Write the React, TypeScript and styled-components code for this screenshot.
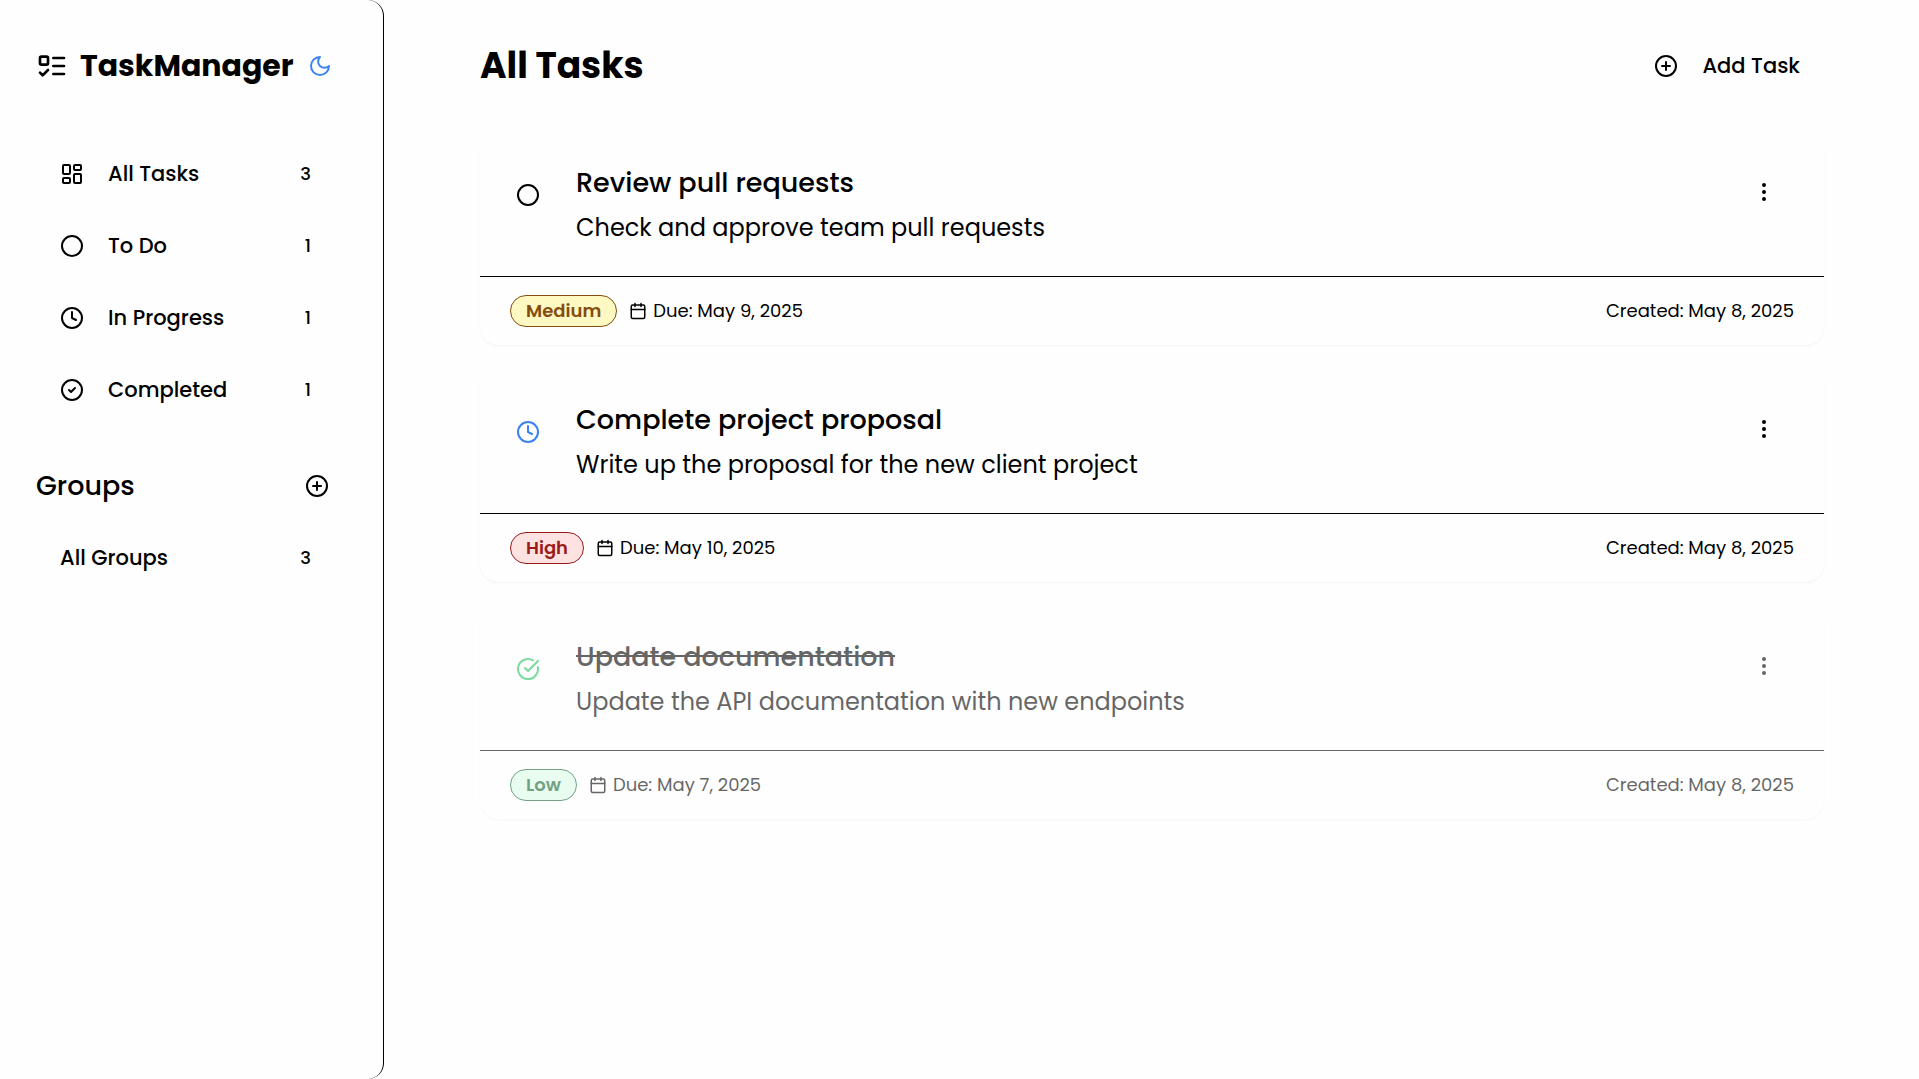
import React from "react";
import styled, { createGlobalStyle, css } from "styled-components";

const Global = createGlobalStyle`
  *, *::before, *::after { box-sizing: border-box; }
  html, body { margin: 0; padding: 0; }
  body {
    background: #fefefe;
    color: #000;
    font-family: Poppins, Inter, "Noto Sans", "Liberation Sans", sans-serif;
  }
  button { font: inherit; color: inherit; background: none; border: 0; padding: 0; margin: 0; }
  h1, h2, h3, p { margin: 0; }
`;

const Layout = styled.div`
  display: flex;
  height: 100vh;
  overflow: hidden;
`;

const Sidebar = styled.aside`
  width: 384px;
  flex: none;
  border-right: 1px solid #000;
  border-radius: 0 16px 16px 0;
  padding: 36px 36px 0;
`;

const Brand = styled.div`
  display: flex;
  align-items: center;
  height: 60px;
`;

const nowrap = css`
  white-space: nowrap;
`;

const BrandName = styled.h1`
  flex: none;
  width: 217px;
  margin-left: 12px;
  margin-right: 11px;
  font-size: 30px;
  font-weight: 700;
  ${nowrap}
`;

const Nav = styled.nav`
  display: flex;
  flex-direction: column;
  gap: 12px;
  margin-top: 48px;
`;

const NavItem = styled.button`
  display: flex;
  align-items: center;
  height: 60px;
  padding: 0 36px 0 24px;
  text-align: left;
`;

const NavLabel = styled.span<{ $indent?: boolean }>`
  flex: 1;
  margin-left: ${(p) => (p.$indent ? 24 : 0)}px;
  padding-bottom: 1px;
  font-size: 21px;
  font-weight: 500;
  line-height: 32px;
  ${nowrap}
`;

const NavCount = styled.span`
  font-size: 18px;
  font-weight: 500;
  line-height: 24px;
`;

const GroupsHeader = styled.div`
  display: flex;
  align-items: center;
  justify-content: space-between;
  height: 60px;
  margin: 36px 0 12px;
  padding-right: 18px;
`;

const GroupsTitle = styled.h2`
  font-size: 27px;
  font-weight: 500;
  ${nowrap}
`;

const Main = styled.main`
  flex: 1;
  min-width: 0;
  padding: 36px 95px 0 96px;
`;

const PageHeader = styled.header`
  display: flex;
  align-items: center;
  justify-content: space-between;
  height: 60px;
`;

const PageTitle = styled.h2`
  padding-bottom: 1px;
  font-size: 36px;
  font-weight: 700;
  line-height: 54px;
  ${nowrap}
`;

const AddButton = styled.button`
  display: flex;
  align-items: center;
  height: 60px;
  padding-right: 24px;
`;

const Raised = styled.span`
  padding-bottom: 2px;
`;

const TaskList = styled.section`
  display: flex;
  flex-direction: column;
  gap: 24px;
  margin-top: 36px;
`;

const Card = styled.article<{ $done?: boolean }>`
  height: 213px;
  border-radius: 18px;
  box-shadow: 0 1px 2px rgba(0, 0, 0, 0.05);
  opacity: ${(p) => (p.$done ? 0.6 : 1)};
`;

const CardBody = styled.div`
  display: flex;
  align-items: flex-start;
  height: 145px;
  padding: 24px 48px 0 36px;
  border-bottom: 1px solid #000;
`;

const StatusButton = styled.button<{ $color: string }>`
  display: flex;
  margin-top: 27px;
  color: ${(p) => p.$color};
`;

const CardText = styled.div`
  flex: 1;
  margin-left: 36px;
  padding-top: 6px;
`;

const TaskTitle = styled.h3<{ $done?: boolean }>`
  font-size: 27px;
  font-weight: 500;
  line-height: 42px;
  text-decoration: ${(p) => (p.$done ? "line-through" : "none")};
  ${nowrap}
`;

const TaskDescription = styled.p`
  margin-top: 3px;
  font-size: 24px;
  line-height: 42px;
  ${nowrap}
`;

const MenuButton = styled.button`
  display: flex;
  margin-top: 24px;
`;

const CardFooter = styled.div`
  display: flex;
  align-items: center;
  height: 68px;
  padding: 0 30px;
  font-size: 18px;
  line-height: 27px;
`;

const Badge = styled.span<{ $fg: string; $bg: string }>`
  display: flex;
  align-items: center;
  justify-content: center;
  height: 32px;
  padding: 0 15px 2px;
  border: 1px solid ${(p) => p.$fg};
  border-radius: 16px;
  background: ${(p) => p.$bg};
  color: ${(p) => p.$fg};
  font-weight: 600;
`;

const DueDate = styled.span`
  display: flex;
  align-items: center;
  gap: 6px;
  margin-left: 12px;
  ${nowrap}
`;

const CreatedDate = styled(Raised)`
  margin-left: auto;
`;

const Icon = styled.svg.attrs({
  viewBox: "0 0 24 24",
  fill: "none",
  stroke: "currentColor",
  strokeWidth: 2,
  strokeLinecap: "round",
  strokeLinejoin: "round",
})<{ $size?: number; $color?: string }>`
  flex: none;
  width: ${(p) => p.$size ?? 24}px;
  height: ${(p) => p.$size ?? 24}px;
  color: ${(p) => p.$color ?? "inherit"};
`;

const ListTodoIcon = () => (
  <Icon $size={32}>
    <rect x="3" y="5" width="6" height="6" rx="1" />
    <path d="m3 17 2 2 4-4M13 6h8M13 12h8M13 18h8" />
  </Icon>
);
const MoonIcon = () => (
  <Icon $color="#3b82f6">
    <path d="M12 3a6 6 0 0 0 9 9 9 9 0 1 1-9-9Z" />
  </Icon>
);
const DashboardIcon = () => (
  <Icon>
    <rect width="7" height="9" x="3" y="3" rx="1" />
    <rect width="7" height="5" x="14" y="3" rx="1" />
    <rect width="7" height="9" x="14" y="12" rx="1" />
    <rect width="7" height="5" x="3" y="16" rx="1" />
  </Icon>
);
const CircleIcon = () => (
  <Icon>
    <circle cx="12" cy="12" r="10" />
  </Icon>
);
const ClockIcon = () => (
  <Icon>
    <circle cx="12" cy="12" r="10" />
    <path d="M12 6v6l4 2" />
  </Icon>
);
const CheckIcon = () => (
  <Icon>
    <circle cx="12" cy="12" r="10" />
    <path d="m9 12 2 2 4-4" />
  </Icon>
);
const CheckBigIcon = () => (
  <Icon>
    <path d="M21.801 10A10 10 0 1 1 17 3.335" />
    <path d="m9 11 3 3L22 4" />
  </Icon>
);
const PlusIcon = () => (
  <Icon>
    <circle cx="12" cy="12" r="10" />
    <path d="M8 12h8M12 8v8" />
  </Icon>
);
const CalendarIcon = () => (
  <Icon $size={18}>
    <path d="M8 2v4M16 2v4M3 10h18" />
    <rect width="18" height="18" x="3" y="4" rx="2" />
  </Icon>
);
const MoreIcon = () => (
  <Icon>
    <circle cx="12" cy="12" r="1" />
    <circle cx="12" cy="5" r="1" />
    <circle cx="12" cy="19" r="1" />
  </Icon>
);

const navItems = [
  { label: "All Tasks", count: 3, icon: <DashboardIcon /> },
  { label: "To Do", count: 1, icon: <CircleIcon /> },
  { label: "In Progress", count: 1, icon: <ClockIcon /> },
  { label: "Completed", count: 1, icon: <CheckIcon /> },
];

const priorities = {
  Medium: { fg: "#854d0e", bg: "#fef9c3" },
  High: { fg: "#991b1b", bg: "#fee2e2" },
  Low: { fg: "#166534", bg: "#dcfce7" },
};

type Task = {
  title: string;
  text: string;
  priority: keyof typeof priorities;
  due: string;
  icon: React.ReactNode;
  color: string;
  done?: boolean;
};

const tasks: Task[] = [
  {
    title: "Review pull requests",
    text: "Check and approve team pull requests",
    priority: "Medium",
    due: "May 9, 2025",
    icon: <CircleIcon />,
    color: "#000",
  },
  {
    title: "Complete project proposal",
    text: "Write up the proposal for the new client project",
    priority: "High",
    due: "May 10, 2025",
    icon: <ClockIcon />,
    color: "#3b82f6",
  },
  {
    title: "Update documentation",
    text: "Update the API documentation with new endpoints",
    priority: "Low",
    due: "May 7, 2025",
    icon: <CheckBigIcon />,
    color: "#22c55e",
    done: true,
  },
];

export default function App() {
  return (
    <Layout>
      <Global />
      <Sidebar>
        <Brand>
          <ListTodoIcon />
          <BrandName>TaskManager</BrandName>
          <MoonIcon />
        </Brand>
        <Nav>
          {navItems.map((n) => (
            <NavItem key={n.label}>
              {n.icon}
              <NavLabel $indent>{n.label}</NavLabel>
              <NavCount>{n.count}</NavCount>
            </NavItem>
          ))}
        </Nav>
        <GroupsHeader>
          <GroupsTitle>Groups</GroupsTitle>
          <PlusIcon />
        </GroupsHeader>
        <NavItem as="div">
          <NavLabel>All Groups</NavLabel>
          <NavCount>3</NavCount>
        </NavItem>
      </Sidebar>
      <Main>
        <PageHeader>
          <PageTitle>All Tasks</PageTitle>
          <AddButton>
            <PlusIcon />
            <NavLabel $indent>Add Task</NavLabel>
          </AddButton>
        </PageHeader>
        <TaskList>
          {tasks.map((t) => {
            const p = priorities[t.priority];
            return (
              <Card key={t.title} $done={t.done}>
                <CardBody>
                  <StatusButton $color={t.color}>{t.icon}</StatusButton>
                  <CardText>
                    <TaskTitle $done={t.done}>{t.title}</TaskTitle>
                    <TaskDescription>{t.text}</TaskDescription>
                  </CardText>
                  <MenuButton>
                    <MoreIcon />
                  </MenuButton>
                </CardBody>
                <CardFooter>
                  <Badge $fg={p.fg} $bg={p.bg}>{t.priority}</Badge>
                  <DueDate>
                    <CalendarIcon />
                    <Raised>Due: {t.due}</Raised>
                  </DueDate>
                  <CreatedDate>Created: May 8, 2025</CreatedDate>
                </CardFooter>
              </Card>
            );
          })}
        </TaskList>
      </Main>
    </Layout>
  );
}
